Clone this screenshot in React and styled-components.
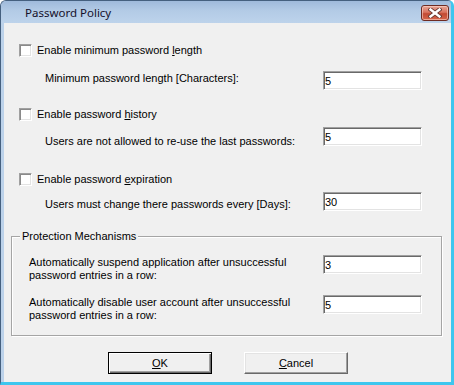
import React from "react";
import styled, { createGlobalStyle } from "styled-components";

const GlobalStyle = createGlobalStyle`
  html, body { margin: 0; padding: 0; background: #ffffff; }
  body { font-family: "Liberation Sans", Arial, sans-serif; font-size: 11px; color: #000; }
  * { box-sizing: border-box; }
`;

const Window = styled.div`
  width: 454px;
  height: 385px;
  display: flex;
  flex-direction: column;
  border-top: 1px solid #45607f;
  border-left: 1px solid #45607f;
  border-right: 3px solid #3ec6ee;
  border-bottom: 3px solid #3ec6ee;
  border-radius: 6px 6px 0 0;
  background: #bcd2ea;
  overflow: hidden;
`;

const TitleBar = styled.div`
  height: 22px;
  flex: none;
  display: flex;
  align-items: center;
  justify-content: space-between;
  padding: 0 2px 0 24px;
  background: linear-gradient(#9fbadb 0%, #b3cbe6 45%, #bdd3eb 100%);
`;

const Title = styled.span`
  font-family: "Noto Sans", "Open Sans", sans-serif;
  font-size: 11.5px;
  color: #15102a;
  padding-top: 1px;
`;

const CloseButton = styled.div`
  width: 28px;
  height: 16px;
  margin-top: 2px;
  border: 1px solid #6e2b22;
  border-radius: 3px;
  background: linear-gradient(#e8a697 0%, #d9735f 45%, #c24a33 55%, #d6664c 100%);
  box-shadow: inset 0 0 0 1px rgba(255, 220, 210, 0.55);
  display: flex;
  align-items: center;
  justify-content: center;
`;

const Client = styled.div`
  flex: 1;
  margin-left: 3px;
  background: #f0f0f0;
  display: flex;
  flex-direction: column;
  padding: 21px 9px 0 7px;
`;

const Options = styled.div`
  display: flex;
  flex-direction: column;
  padding: 0 20px 0 8px;
`;

const CheckRow = styled.label`
  display: flex;
  align-items: flex-start;
  gap: 5px;
  height: 13px;
  line-height: 13px;
  margin-top: ${(p) => p.$mt || 0}px;
`;

const CheckBox = styled.span`
  width: 13px;
  height: 13px;
  flex: none;
  background: #ffffff;
  border: 1px solid;
  border-color: #a0a0a0 #ffffff #ffffff #a0a0a0;
  box-shadow: inset 1px 1px 0 #8a8a8a, inset -1px -1px 0 #e3e3e3;
`;

const FieldRow = styled.div`
  display: flex;
  align-items: flex-start;
  justify-content: space-between;
  margin-top: ${(p) => p.$mt || 0}px;
  padding-left: ${(p) => p.$indent || 0}px;
`;

const FieldLabel = styled.span`
  line-height: 13px;
  padding-top: ${(p) => p.$offset || 0}px;
`;

const TextBox = styled.input`
  width: 99px;
  height: 19px;
  flex: none;
  margin: 0;
  padding: 0 1px;
  font-family: "Liberation Sans", Arial, sans-serif;
  font-size: 11px;
  color: #000;
  background: #ffffff;
  border: 1px solid;
  border-color: #a0a0a0 #ffffff #ffffff #a0a0a0;
  box-shadow: inset 1px 1px 0 #696969, inset -1px -1px 0 #e3e3e3;
  outline: none;
`;

const Group = styled.div`
  position: relative;
  margin-top: ${(p) => p.$mt || 0}px;
  border: 1px solid #a5a5a5;
  box-shadow: inset 1px 1px 0 #ffffff, 1px 1px 0 #ffffff;
  padding: 18px 19px 13px 17px;
  display: flex;
  flex-direction: column;
  gap: 13px;
`;

const Legend = styled.span`
  position: absolute;
  top: -7px;
  left: 8px;
  padding: 0 2px;
  line-height: 13px;
  background: #f0f0f0;
`;

const ButtonBar = styled.div`
  display: flex;
  justify-content: center;
  gap: 32px;
  margin-top: 16px;
  padding-left: 3px;
`;

const Button = styled.button`
  width: 104px;
  height: 22px;
  margin: 0;
  padding: 0;
  font-family: "Liberation Sans", Arial, sans-serif;
  font-size: 11px;
  color: #000;
  background: #f0f0f0;
  border: 1px solid;
  border-color: ${(p) => (p.$default ? "#000000" : "#ffffff #696969 #696969 #ffffff")};
  box-shadow: ${(p) =>
    p.$default
      ? "inset 1px 1px 0 #ffffff, inset -1px -1px 0 #696969, inset -2px -2px 0 #a0a0a0"
      : "inset -1px -1px 0 #a0a0a0, inset 1px 1px 0 #e3e3e3"};
`;

const CloseGlyph = () => (
  <svg width="14" height="10" viewBox="0 0 14 10">
    <path d="M2.5 1.5 L11.5 8.5 M11.5 1.5 L2.5 8.5" stroke="#6a3a33" strokeWidth="4.2" strokeLinecap="square" fill="none" />
    <path d="M2.5 1.5 L11.5 8.5 M11.5 1.5 L2.5 8.5" stroke="#ffffff" strokeWidth="2.4" strokeLinecap="square" fill="none" />
  </svg>
);

export default function App() {
  return (
    <>
      <GlobalStyle />
      <Window>
        <TitleBar>
          <Title>Password Policy</Title>
          <CloseButton>
            <CloseGlyph />
          </CloseButton>
        </TitleBar>
        <Client>
          <Options>
            <CheckRow>
              <CheckBox />
              <span>Enable minimum password <u>l</u>ength</span>
            </CheckRow>
            <FieldRow $mt={14} $indent={26}>
              <FieldLabel $offset={1}>Minimum password length [Characters]:</FieldLabel>
              <TextBox readOnly defaultValue="5" />
            </FieldRow>

            <CheckRow $mt={18}>
              <CheckBox />
              <span>Enable password <u>h</u>istory</span>
            </CheckRow>
            <FieldRow $mt={6} $indent={26}>
              <FieldLabel $offset={8}>Users are not allowed to re-use the last passwords:</FieldLabel>
              <TextBox readOnly defaultValue="5" />
            </FieldRow>

            <CheckRow $mt={25}>
              <CheckBox />
              <span>Enable password <u>e</u>xpiration</span>
            </CheckRow>
            <FieldRow $mt={6} $indent={26}>
              <FieldLabel $offset={6}>Users must change there passwords every [Days]:</FieldLabel>
              <TextBox readOnly defaultValue="30" />
            </FieldRow>
          </Options>

          <Group $mt={25}>
            <Legend>Protection Mechanisms</Legend>
            <FieldRow>
              <FieldLabel $offset={1}>
                Automatically suspend application after unsuccessful
                <br />
                password entries in a row:
              </FieldLabel>
              <TextBox readOnly defaultValue="3" />
            </FieldRow>
            <FieldRow>
              <FieldLabel $offset={1}>
                Automatically disable user account after unsuccessful
                <br />
                password entries in a row:
              </FieldLabel>
              <TextBox readOnly defaultValue="5" />
            </FieldRow>
          </Group>

          <ButtonBar>
            <Button $default>
              <u>O</u>K
            </Button>
            <Button>
              <u>C</u>ancel
            </Button>
          </ButtonBar>
        </Client>
      </Window>
    </>
  );
}
